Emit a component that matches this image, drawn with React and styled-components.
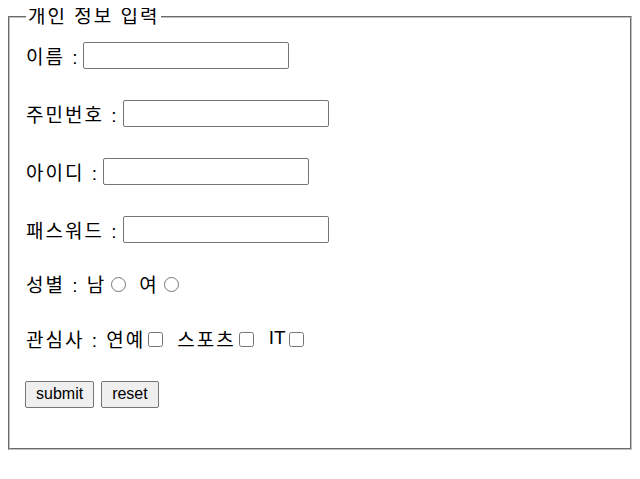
import React from "react";
import styled, { createGlobalStyle } from "styled-components";

const GlobalStyle = createGlobalStyle`
  body {
    margin: 8px;
    background: #fff;
    font-family: "Liberation Sans", "Noto Sans CJK KR", sans-serif;
    color: #000;
  }
`;

const Fieldset = styled.fieldset`
  margin: 0;
  padding: 0 16px 40px;
  border: 2px groove rgb(192, 192, 192);
  min-width: 0;
`;

const Legend = styled.legend`
  padding: 0 2px;
  font-size: 19px;
  line-height: 18px;
  letter-spacing: 2px;
`;

const Row = styled.div`
  display: flex;
  align-items: center;
  height: 28px;
  margin-top: ${(p) => p.$top}px;
  font-size: 19px;
  letter-spacing: 2px;
  white-space: pre;
`;

const Label = styled.span`
  margin-right: 4px;
`;

const Latin = styled.span`
  letter-spacing: 0;
`;

const TextInput = styled.input`
  box-sizing: border-box;
  width: 206px;
  height: 27px;
  margin: 0 0 0 ${(p) => p.$shift || 0}px;
  padding: 1px 2px;
  border: 1px solid #767676;
  border-radius: 2px;
  font-size: 16px;
  background: #fff;
`;

const Radio = styled.input.attrs({ type: "radio" })`
  width: 15px;
  height: 15px;
  margin: 2px 4px 0 5px;
`;

const Check = styled.input.attrs({ type: "checkbox" })`
  width: 15px;
  height: 15px;
  margin: 2px 4px 0 3px;
`;

const Gap = styled.span`
  display: inline-block;
  width: ${(p) => p.$w}px;
`;

const Button = styled.button`
  box-sizing: border-box;
  height: 27px;
  margin: 0 7px 0 0;
  padding: 0 10px;
  border: 1px solid #767676;
  border-radius: 2px;
  background: #efefef;
  font-family: "Liberation Sans", Arial, sans-serif;
  font-size: 16px;
  letter-spacing: 0;
  color: #000;

  &:first-child {
    margin-left: -1px;
  }
`;

const fields = [
  { label: "이름", top: 15, shift: -1 },
  { label: "주민번호", top: 30, shift: 1 },
  { label: "아이디", top: 30, shift: 0 },
  { label: "패스워드", top: 30, shift: 1 },
];

export default function App() {
  return (
    <>
      <GlobalStyle />
      <form>
        <Fieldset>
          <Legend>개인 정보 입력</Legend>
          {fields.map((f) => (
            <Row key={f.label} $top={f.top}>
              <Label>{f.label} :</Label>
              <TextInput type="text" $shift={f.shift} />
            </Row>
          ))}
          <Row $top={26}>
            성별 : 남<Radio name="gender" />
            <Gap $w={9} />여<Radio name="gender" />
          </Row>
          <Row $top={27}>
            관심사 : 연예<Check />
            <Gap $w={10} />스포츠<Check />
            <Gap $w={11} />
            <Latin>IT</Latin>
            <Check />
          </Row>
          <Row $top={28}>
            <Button type="submit">submit</Button>
            <Button type="reset">reset</Button>
          </Row>
        </Fieldset>
      </form>
    </>
  );
}
